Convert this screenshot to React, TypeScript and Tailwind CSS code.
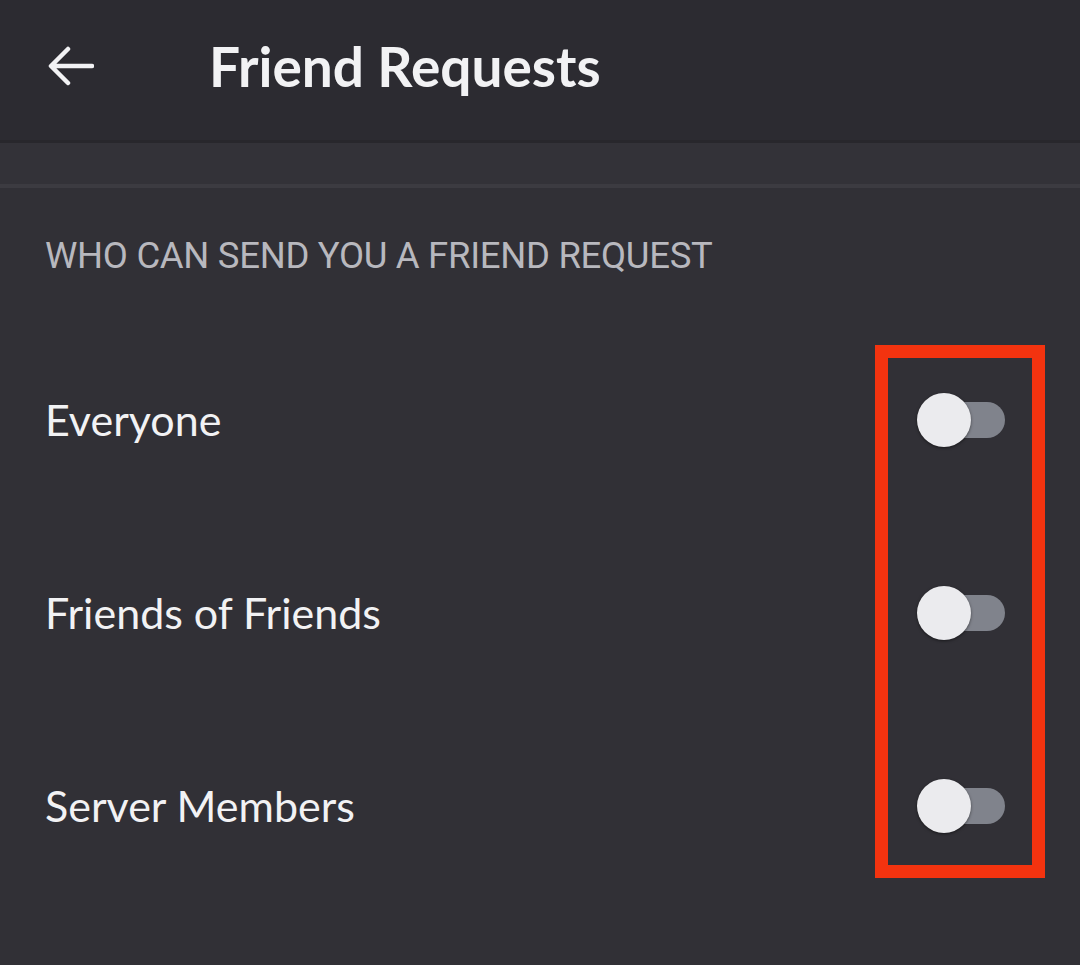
import React from 'react';

const Toggle: React.FC = () => {
  return (
    <div className="relative w-[90px] h-[56px] flex items-center">
      <div className="ml-[28px] w-[60px] h-[36px] rounded-full bg-[#80838c]" />
      <div className="absolute left-0 top-[1px] w-[54px] h-[54px] rounded-full bg-[#ebebee] shadow-[0_1px_3px_rgba(0,0,0,0.5)]" />
    </div>
  );
};

const rows = ['Everyone', 'Friends of Friends', 'Server Members'];

const App: React.FC = () => {
  return (
    <div className="w-[1080px] h-[965px] bg-[#313036] overflow-hidden font-['Lato',sans-serif]">
      <header className="h-[140px] bg-[#2c2b31] flex items-center pl-[48px] pb-[8px]">
        <svg width="46" height="40" viewBox="0 0 46 40" fill="none" stroke="#f2f2f4" strokeWidth="4.5" strokeLinecap="round" strokeLinejoin="round">
          <path d="M44 20H4M20 3L3 20L20 37" />
        </svg>
        <h1 className="ml-[115px] text-[55px] font-bold text-[#f2f2f4] leading-none">Friend Requests</h1>
      </header>
      <div className="h-[3px] bg-[#28272c]" />
      <div className="h-[41px] bg-[#333238]" />
      <div className="h-[4px] bg-[#3c3b41]" />

      <div className="pl-[45px] pt-[50px] text-[36.5px] text-[#b8b8be] font-['Roboto',sans-serif] leading-none tracking-[-0.3px]">
        WHO CAN SEND YOU A FRIEND REQUEST
      </div>

      <div className="relative mt-[49px]">
        {rows.map((label, i) => (
          <div key={i} className="h-[193px] flex items-center justify-between pl-[45px] pr-[73px]">
            <span className="text-[43px] text-[#f2f2f4]">{label}</span>
            <Toggle />
          </div>
        ))}
        <div className="absolute left-[875px] top-[21px] w-[170px] h-[533px] border-[13px] border-[#f3330f]" />
      </div>
    </div>
  );
};

export default App;
